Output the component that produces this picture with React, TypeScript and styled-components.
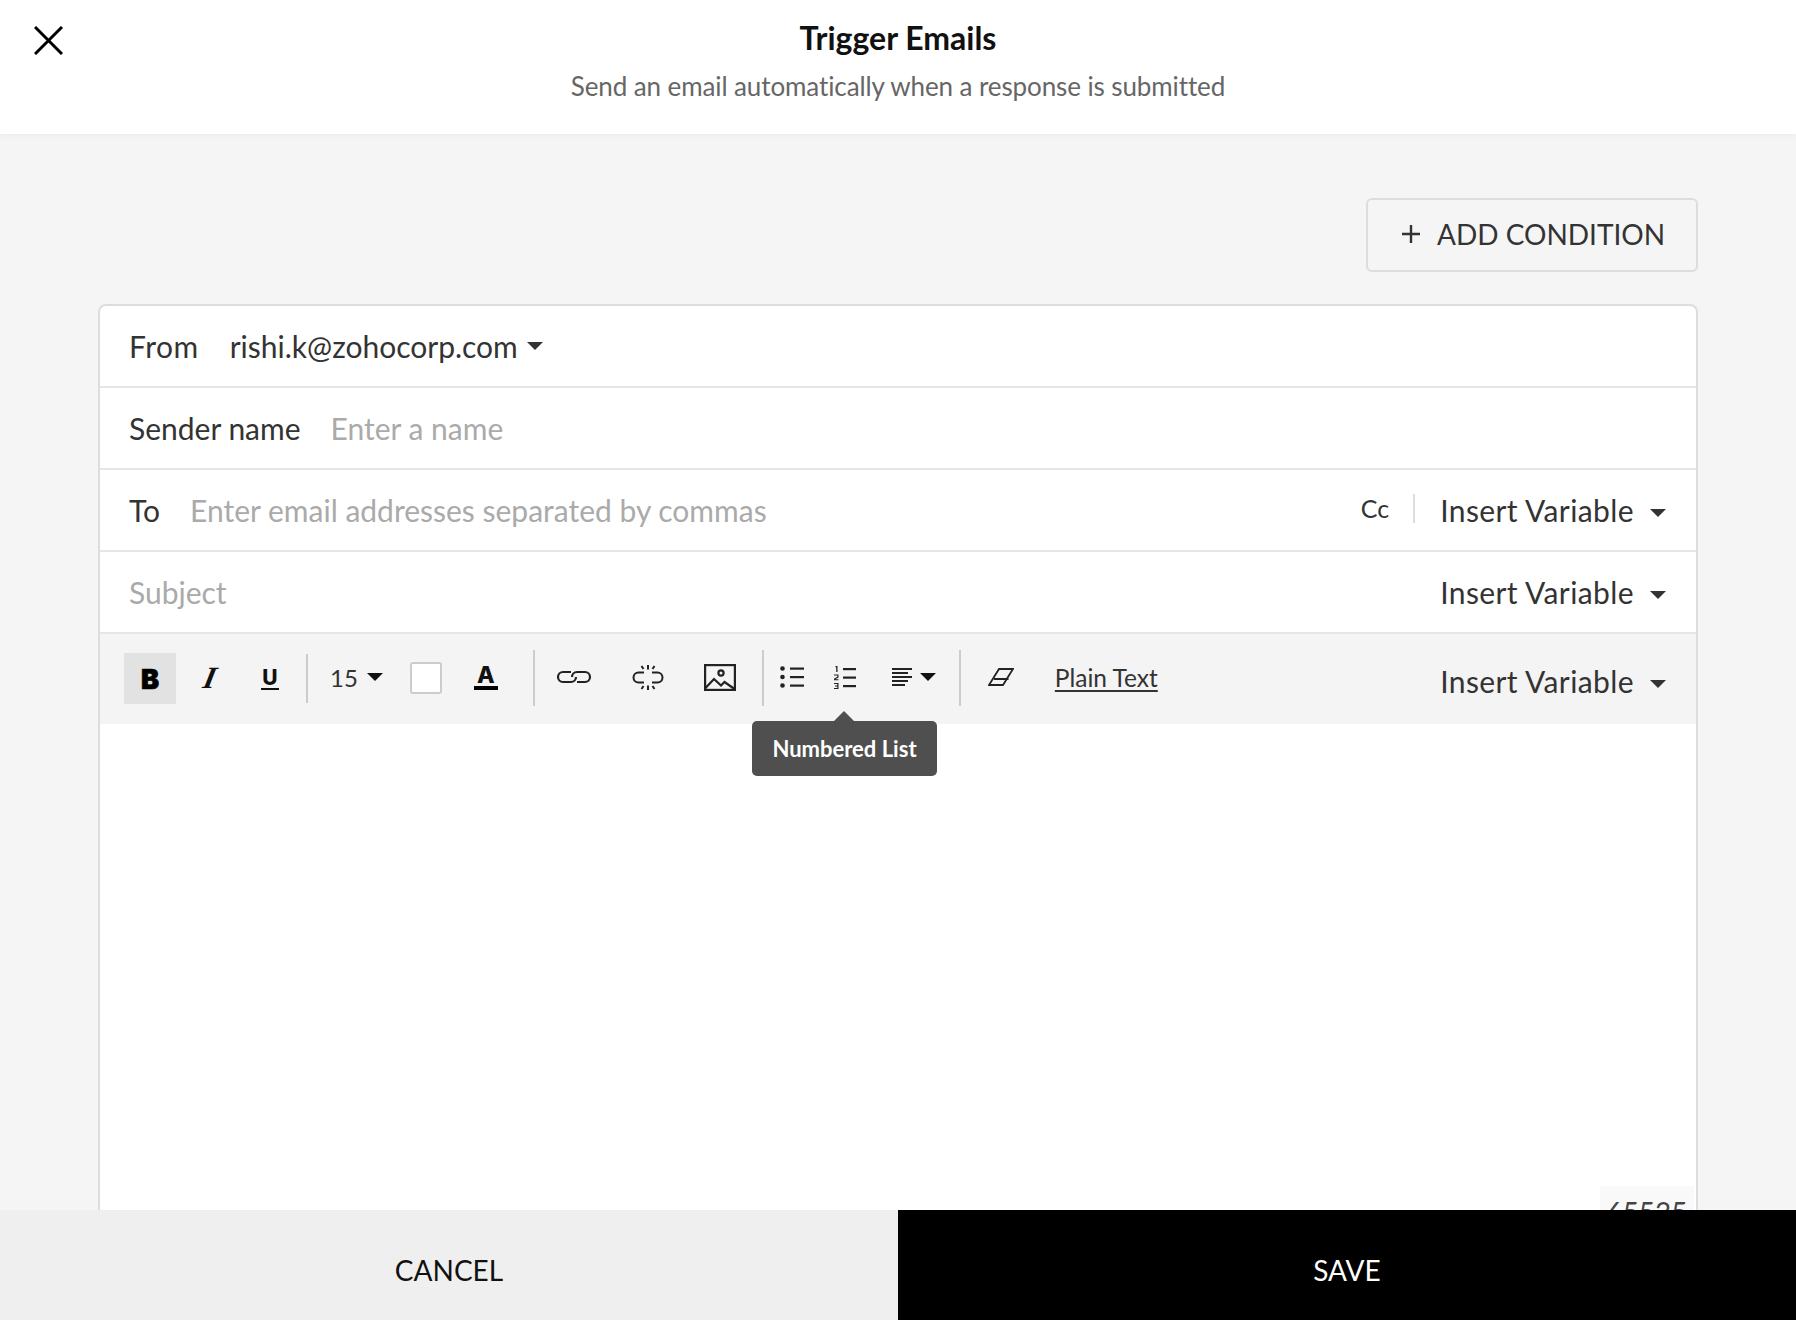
import styled, { createGlobalStyle } from "styled-components";

const GlobalStyle = createGlobalStyle`
  html, body {
    margin: 0;
    padding: 0;
    height: 100%;
    overflow: hidden;
    font-family: Lato, "Liberation Sans", sans-serif;
    font-variant-ligatures: none;
    color: #333;
  }
  #root {
    height: 100%;
  }
`;

const Page = styled.div`
  display: flex;
  flex-direction: column;
  height: 1320px;
  background: #f5f5f5;
`;

const Header = styled.header`
  display: grid;
  grid-template-columns: 1fr auto 1fr;
  height: 134px;
  flex: none;
  background: #fff;
  box-shadow: 0 1px 8px rgba(0, 0, 0, 0.05);
  position: relative;
  z-index: 2;
`;

const CloseButton = styled.div`
  padding: 26px 0 0 34px;
  height: 29px;
  line-height: 0;
`;

const Titles = styled.div`
  display: flex;
  flex-direction: column;
  align-items: center;
`;

const Title = styled.h1`
  margin: 19px 0 0;
  font-size: 32px;
  line-height: 38px;
  font-weight: 700;
  color: #111;
`;

const Subtitle = styled.p`
  margin: 13px 0 0;
  font-size: 26px;
  line-height: 32px;
  font-weight: 400;
  color: #666;
  letter-spacing: -0.1px;
`;

const Main = styled.main`
  flex: 1;
  min-height: 0;
  overflow: hidden;
  padding: 64px 98px 0 98px;
`;

const ActionBar = styled.div`
  display: flex;
  justify-content: flex-end;
  margin-bottom: 32px;
`;

const AddCondition = styled.button`
  display: flex;
  align-items: center;
  gap: 17px;
  box-sizing: border-box;
  width: 332px;
  height: 74px;
  padding: 0 0 2px 34px;
  border: 2px solid #ddd;
  border-radius: 6px;
  background: transparent;
  font-family: inherit;
  font-size: 28px;
  color: #333;
`;

const Card = styled.section`
  box-sizing: border-box;
  height: 1000px;
  background: #fff;
  border: 2px solid #ddd;
  border-bottom: none;
  border-radius: 8px 8px 0 0;
`;

const Row = styled.div`
  display: flex;
  align-items: center;
  box-sizing: border-box;
  height: 82px;
  padding: 0 30px 0 29px;
  border-bottom: 2px solid #e6e6e6;
  font-size: 30px;
`;

const Label = styled.span<{ $gap: number; $spacing?: number }>`
  margin-right: ${(p) => p.$gap}px;
  letter-spacing: ${(p) => p.$spacing ?? 0}px;
  color: #333;
`;

const Placeholder = styled.span`
  color: #aaa;
`;

const Caret = styled.span`
  display: inline-block;
  flex: none;
  width: 0;
  height: 0;
  border-left: 8px solid transparent;
  border-right: 8px solid transparent;
  border-top: 8px solid #333;
`;

const FromCaret = styled(Caret)`
  margin-left: 9px;
`;

const VariableCaret = styled(Caret)`
  margin-top: 5px;
`;

const InsertVariable = styled.div`
  display: flex;
  align-items: center;
  gap: 16px;
  margin-left: auto;
  color: #333;
  letter-spacing: 0.4px;
`;

const CcLink = styled.span`
  margin-left: auto;
  padding-bottom: 4px;
  font-size: 25px;
  color: #333;
`;

const CcDivider = styled.span`
  width: 2px;
  height: 29px;
  margin: 0 25px 3px 24px;
  background: #ddd;
`;

const CcInsert = styled(InsertVariable)`
  margin-left: 0;
`;

const Toolbar = styled.div`
  display: flex;
  align-items: center;
  position: relative;
  height: 90px;
  box-sizing: border-box;
  padding: 0 30px 2px 24px;
  background: #f4f4f4;
  font-size: 30px;
`;

const ToolbarInsert = styled(InsertVariable)`
  margin-top: 6px;
`;

const FormatButton = styled.span<{ $active?: boolean; $gap?: number }>`
  display: flex;
  align-items: center;
  justify-content: center;
  width: 52px;
  height: 51px;
  margin-left: ${(p) => p.$gap ?? 0}px;
  background: ${(p) => (p.$active ? "#e2e2e2" : "transparent")};
  color: #111;
`;

const BoldGlyph = styled.span`
  margin-top: 3px;
  font-family: Inter, sans-serif;
  font-weight: 900;
  font-size: 27px;
  line-height: 1;
  color: #000;
  -webkit-text-stroke: 0.7px #000;
`;

const ItalicGlyph = styled.span`
  font-family: "Liberation Serif", serif;
  font-style: italic;
  font-weight: 700;
  font-size: 31px;
  line-height: 26px;
  text-align: center;
  transform: skewX(-12deg);
`;

const UnderlineGlyph = styled.span`
  font-family: Inter, sans-serif;
  font-weight: 800;
  font-size: 21px;
  line-height: 21px;
  width: 18px;
  text-align: center;
  border-bottom: 2px solid #111;
`;

const Separator = styled.span<{ $gap: number; $short?: boolean }>`
  flex: none;
  width: 2px;
  height: ${(p) => (p.$short ? 49 : 56)}px;
  margin-left: ${(p) => p.$gap}px;
  background: #ccc;
`;

const SizeSelect = styled.span`
  display: flex;
  align-items: center;
  gap: 9px;
  margin-left: 22px;
  margin-bottom: 2px;
  font-size: 24px;
  color: #333;
`;

const BlackCaret = styled(Caret)`
  border-top-color: #111;
`;

const Swatch = styled.span`
  flex: none;
  box-sizing: border-box;
  width: 32px;
  height: 32px;
  margin-left: 27px;
  background: #fff;
  border: 2px solid #ccc;
  border-radius: 3px;
`;

const ColorGlyph = styled.span`
  flex: none;
  width: 24px;
  margin-left: 32px;
  margin-bottom: 2px;
  font-family: Inter, sans-serif;
  font-weight: 800;
  font-size: 23px;
  line-height: 22px;
  text-align: center;
  color: #111;
  border-bottom: 4px solid #000;
`;

const ToolIcon = styled.span<{ $gap: number }>`
  display: flex;
  align-items: center;
  gap: 8px;
  flex: none;
  margin-left: ${(p) => p.$gap}px;
  margin-bottom: 2px;
  line-height: 0;
`;

const PlainText = styled.span`
  margin-left: 41px;
  margin-bottom: 2px;
  font-size: 24.5px;
  color: #333;
  text-decoration: underline;
  text-decoration-thickness: 2px;
  text-underline-offset: 3px;
`;

const Tooltip = styled.div`
  position: absolute;
  left: 652px;
  top: 87px;
  width: 185px;
  height: 55px;
  display: flex;
  align-items: center;
  justify-content: center;
  background: #4f4f4f;
  border-radius: 5px;
  color: #fff;
  font-size: 22px;
  font-weight: 700;
  z-index: 3;

  &::before {
    content: "";
    position: absolute;
    left: 82px;
    top: -10px;
    border-left: 10px solid transparent;
    border-right: 10px solid transparent;
    border-bottom: 10px solid #4f4f4f;
  }
`;

const Editor = styled.div`
  position: relative;
  height: 500px;
`;

const Counter = styled.div`
  position: absolute;
  right: 2px;
  top: 462px;
  width: 94px;
  height: 60px;
  background: #f9f9f9;
  padding-top: 8px;
  box-sizing: border-box;
  text-align: center;
  font-size: 28px;
  line-height: 36px;
  color: #444;
`;

const Footer = styled.footer`
  display: grid;
  grid-template-columns: 1fr 1fr;
  flex: none;
  height: 110px;
  position: relative;
  z-index: 2;
`;

const FooterButton = styled.button<{ $primary?: boolean }>`
  border: none;
  padding: 10px 0 0;
  font-family: inherit;
  font-size: 28px;
  background: ${(p) => (p.$primary ? "#000" : "#efefef")};
  color: ${(p) => (p.$primary ? "#fff" : "#111")};
`;

const Insert = () => (
  <>
    <span>Insert Variable</span>
    <VariableCaret />
  </>
);

export default function App() {
  return (
    <Page>
      <GlobalStyle />
      <Header>
        <CloseButton>
          <svg width="29" height="29" viewBox="0 0 29 29" fill="none" stroke="#000" strokeWidth="3">
            <path d="M1 1l27 27M28 1L1 28" />
          </svg>
        </CloseButton>
        <Titles>
          <Title>Trigger Emails</Title>
          <Subtitle>Send an email automatically when a response is submitted</Subtitle>
        </Titles>
      </Header>
      <Main>
        <ActionBar>
          <AddCondition>
            <svg width="18" height="18" viewBox="0 0 18 18" stroke="#333" strokeWidth="2.4">
              <path d="M9 0v18M0 9h18" />
            </svg>
            ADD CONDITION
          </AddCondition>
        </ActionBar>
        <Card>
          <Row>
            <Label $gap={31} $spacing={0.5}>From</Label>
            <span>rishi.k@zohocorp.com</span>
            <FromCaret />
          </Row>
          <Row>
            <Label $gap={30}>Sender name</Label>
            <Placeholder>Enter a name</Placeholder>
          </Row>
          <Row>
            <Label $gap={30}>To</Label>
            <Placeholder>Enter email addresses separated by commas</Placeholder>
            <CcLink>Cc</CcLink>
            <CcDivider />
            <CcInsert>
              <Insert />
            </CcInsert>
          </Row>
          <Row>
            <Placeholder>Subject</Placeholder>
            <InsertVariable>
              <Insert />
            </InsertVariable>
          </Row>
          <Toolbar>
            <FormatButton $active>
              <BoldGlyph>B</BoldGlyph>
            </FormatButton>
            <FormatButton $gap={8}>
              <ItalicGlyph>I</ItalicGlyph>
            </FormatButton>
            <FormatButton $gap={8}>
              <UnderlineGlyph>U</UnderlineGlyph>
            </FormatButton>
            <Separator $gap={10} $short />
            <SizeSelect>
              15
              <BlackCaret />
            </SizeSelect>
            <Swatch />
            <ColorGlyph>A</ColorGlyph>
            <Separator $gap={35} />
            <ToolIcon $gap={21}>
              <svg width="36" height="14" viewBox="0 0 36 14" fill="none" stroke="#222" strokeWidth="2.2">
                <path d="M15 2H7a5 5 0 0 0 0 10h8a5 5 0 0 0 5-5" />
                <path d="M21 12h8a5 5 0 0 0 0-10h-8a5 5 0 0 0-5 5" />
              </svg>
            </ToolIcon>
            <ToolIcon $gap={40}>
              <svg width="32" height="27" viewBox="0 0 32 27" fill="none" stroke="#222" strokeWidth="2">
                <path d="M12 8.500H6.500a5 5 0 0 0 0 10H12M20 8.500h5.500a5 5 0 0 1 0 10H20" />
                <path d="M16 1v4.500M9.500 2l2 3M22.500 2l-2 3M16 21.500V26M9.500 25l2-3M22.500 25l-2-3" />
              </svg>
            </ToolIcon>
            <ToolIcon $gap={40}>
              <svg width="32" height="27" viewBox="0 0 32 27" fill="none" stroke="#222" strokeWidth="2.2">
                <rect x="1.100" y="1.100" width="29.800" height="24.800" />
                <circle cx="17" cy="9" r="2.600" />
                <path d="M1.500 24l8.500-9 7 6.500 3.500-3.500 10 7" />
              </svg>
            </ToolIcon>
            <Separator $gap={26} />
            <ToolIcon $gap={16}>
              <svg width="24" height="22" viewBox="0 0 24 22" fill="#222">
                <circle cx="2.500" cy="2.500" r="2.300" />
                <circle cx="2.500" cy="11" r="2.300" />
                <circle cx="2.500" cy="19.500" r="2.300" />
                <rect x="10" y="1.500" width="14" height="2.200" />
                <rect x="10" y="10" width="14" height="2.200" />
                <rect x="10" y="18.500" width="14" height="2.200" />
              </svg>
            </ToolIcon>
            <ToolIcon $gap={29}>
              <svg width="23" height="23" viewBox="0 0 23 23" fill="#222">
                <rect x="10" y="2" width="13" height="2.200" />
                <rect x="10" y="10.500" width="13" height="2.200" />
                <rect x="10" y="19" width="13" height="2.200" />
                <path d="M2.500 0h2v6H3.200V1.200H2.500zM1 8.500h4.500v3L2.400 13.300H5.500v1H1v-1.600l3.300-1.900V9.500H1zM1 17h4.500v6H1v-1h3.300v-1.500H2v-1h2.300V18H1z" />
              </svg>
            </ToolIcon>
            <ToolIcon $gap={36}>
              <svg width="20" height="18" viewBox="0 0 20 18" fill="#222">
                <rect y="0" width="20" height="2" />
                <rect y="4" width="16" height="2" />
                <rect y="8" width="20" height="2" />
                <rect y="12" width="16" height="2" />
                <rect y="16" width="13" height="2" />
              </svg>
              <BlackCaret />
            </ToolIcon>
            <Separator $gap={23} />
            <ToolIcon $gap={27}>
              <svg width="26" height="18" viewBox="0 0 26 18" fill="none" stroke="#222" strokeWidth="1.800">
                <path d="M11 1h14L15 17H1zM6 11h14.500" />
              </svg>
            </ToolIcon>
            <PlainText>Plain Text</PlainText>
            <ToolbarInsert>
              <Insert />
            </ToolbarInsert>
            <Tooltip>Numbered List</Tooltip>
          </Toolbar>
          <Editor>
            <Counter>65535</Counter>
          </Editor>
        </Card>
      </Main>
      <Footer>
        <FooterButton>CANCEL</FooterButton>
        <FooterButton $primary>SAVE</FooterButton>
      </Footer>
    </Page>
  );
}
